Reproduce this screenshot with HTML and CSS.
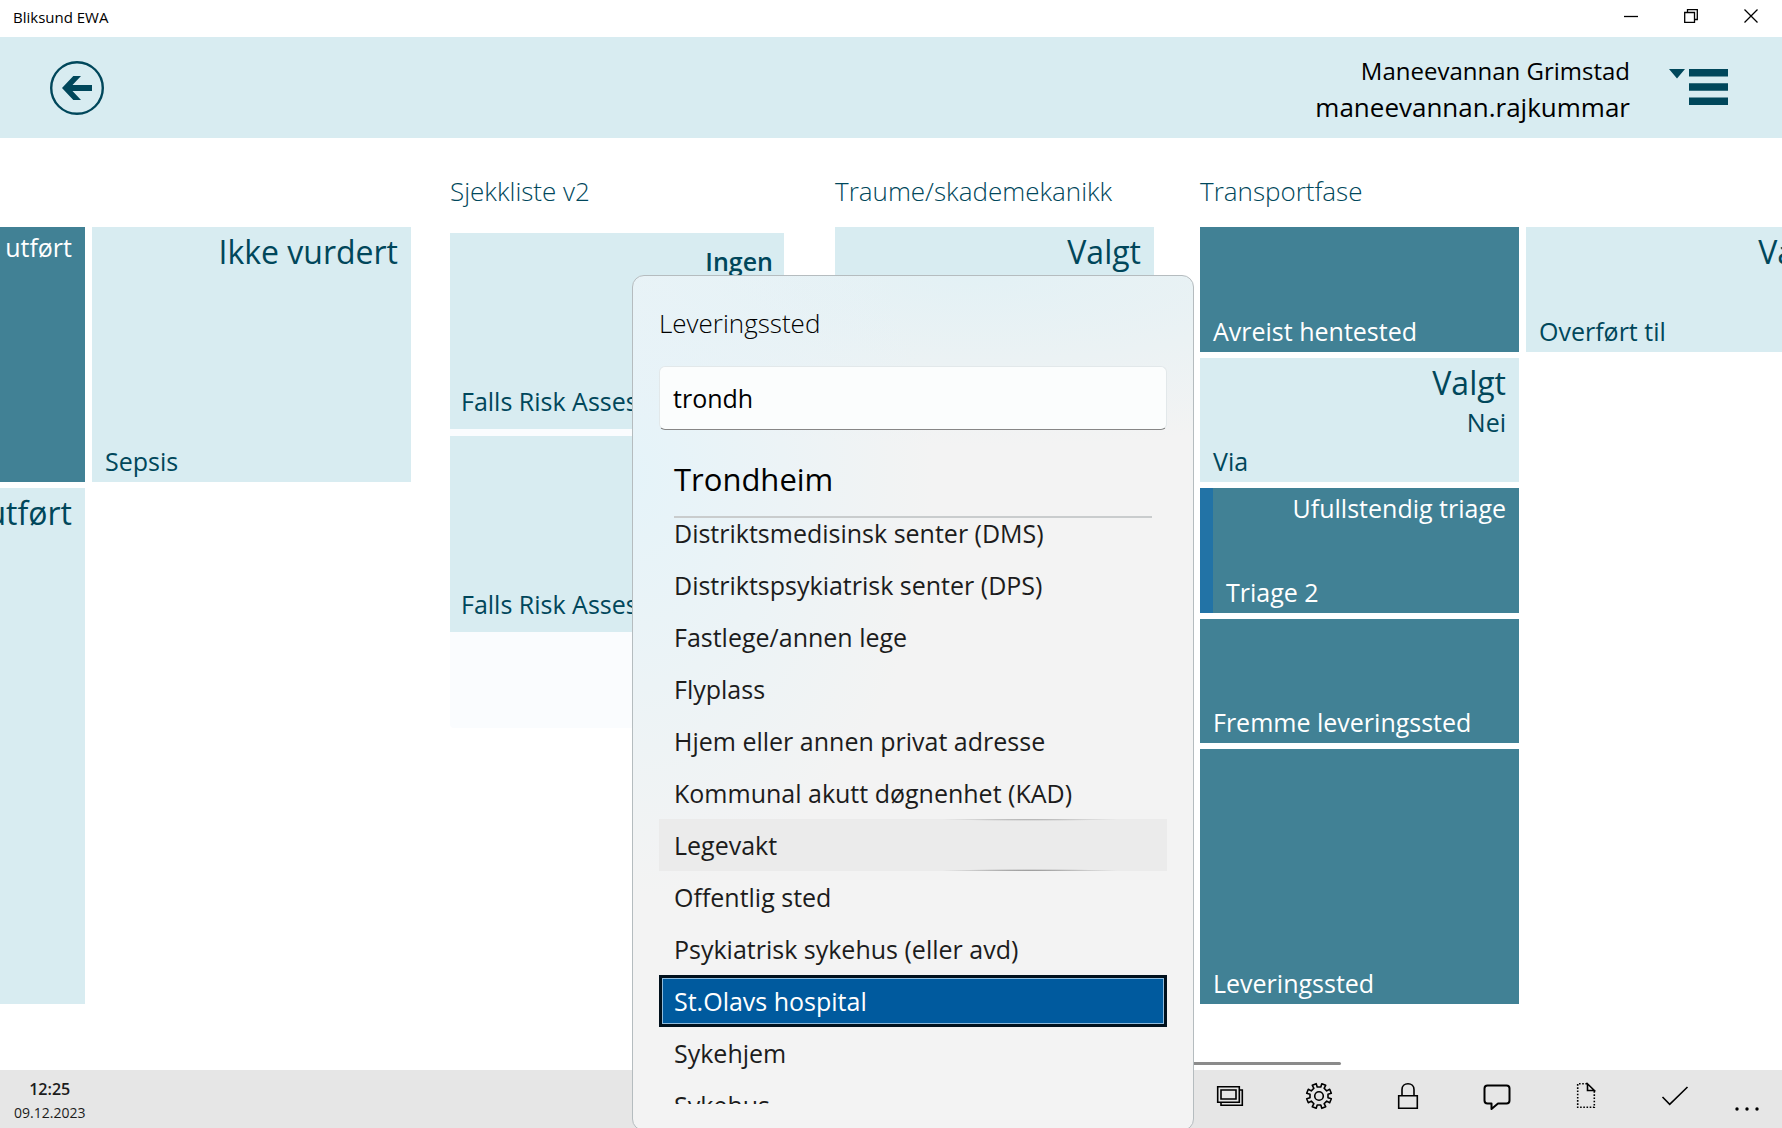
FILE: index.html
```html
<!DOCTYPE html>
<html lang="nb">
<head>
<meta charset="utf-8">
<title>Bliksund EWA</title>
<link rel="stylesheet" href="styles.css">
</head>
<body>
<div class="app">
  <div class="titlebar">
    <span class="titlebar-name">Bliksund EWA</span>
    <div class="window-buttons">
      <button class="window-button" type="button" aria-label="Minimer"><svg width="14" height="14" viewBox="0 0 14 14"><path d="M0 7.500H14"/></svg></button>
      <button class="window-button" type="button" aria-label="Gjenopprett"><svg width="14" height="14" viewBox="0 0 14 14"><path d="M.7 3.500H10.500V13.300H.7ZM3.500 3.500V.7H13.300V10.500H10.500"/></svg></button>
      <button class="window-button" type="button" aria-label="Lukk"><svg width="14" height="14" viewBox="0 0 14 14"><path d="M.5 .5L13.500 13.500M13.500 .5L.5 13.500"/></svg></button>
    </div>
  </div>

  <header class="header">
    <button class="back" type="button" aria-label="Tilbake">
      <svg width="54" height="54" viewBox="0 0 54 54"><circle cx="27" cy="27" r="25.800" fill="none" stroke="#00475b" stroke-width="2.400"/><path fill="#00475b" d="M12 27L23.300 15H31L22.500 24H42V30H22.500L31 39H23.300Z"/></svg>
    </button>
    <div class="user">
      <span class="user-name">Maneevannan Grimstad</span>
      <span class="user-login">maneevannan.rajkummar</span>
    </div>
    <button class="menu" type="button" aria-label="Meny">
      <svg width="60" height="38" viewBox="0 0 60 38"><path fill="#00475b" d="M0 0H16L8 9.500ZM20 0H59V7.500H20ZM20 14.300H59V21.800H20ZM20 28.600H59V36H20Z"/></svg>
    </button>
  </header>

  <main class="board">
    <section class="group group-wide">
      <h2 class="group-title"></h2>
      <div class="tiles">
        <button class="tile tile-dark tile-tall" type="button"><span class="tile-status">utført</span></button>
        <button class="tile tile-tall" type="button"><span class="tile-value">Ikke vurdert</span><span class="tile-name">Sepsis</span></button>
        <button class="tile tile-huge" type="button"><span class="tile-value">utført</span></button>
      </div>
    </section>
    <section class="group group-check">
      <h2 class="group-title">Sjekkliste v2</h2>
      <div class="checklist">
        <button class="card" type="button"><span class="card-status">Ingen</span><span class="tile-name">Falls Risk Assessment</span></button>
        <button class="card" type="button"><span class="tile-name">Falls Risk Assessment</span></button>
      </div>
    </section>
    <section class="group group-trauma">
      <h2 class="group-title">Traume/skademekanikk</h2>
      <div class="tiles">
        <button class="tile" type="button"><span class="tile-value">Valgt</span></button>
      </div>
    </section>
    <section class="group group-wide">
      <h2 class="group-title">Transportfase</h2>
      <div class="tiles">
        <button class="tile tile-dark" type="button"><span class="tile-name">Avreist hentested</span></button>
        <button class="tile" type="button"><span class="tile-value">Valgt</span><span class="tile-name">Overført til</span></button>
        <button class="tile tile-first" type="button"><span class="tile-value">Valgt</span><span class="tile-detail">Nei</span><span class="tile-name">Via</span></button>
        <button class="tile tile-dark tile-triage tile-first" type="button"><span class="tile-status">Ufullstendig triage</span><span class="tile-name">Triage 2</span></button>
        <button class="tile tile-dark tile-first" type="button"><span class="tile-name">Fremme leveringssted</span></button>
        <button class="tile tile-dark tile-tall tile-first" type="button"><span class="tile-name">Leveringssted</span></button>
      </div>
    </section>
    <div class="scrollbar"></div>
  </main>

  <footer class="footer">
    <div class="clock"><strong class="clock-time">12:25</strong><span class="clock-date">09.12.2023</span></div>
    <div class="commands">
      <button class="command" type="button" aria-label="Vinduer"><svg width="28" height="28" viewBox="0 0 28 28"><path d="M1.700 4.700H23.300V20.300H1.700ZM5 8H20V17H5ZM5 20.500V23.300H26.300V8H23.500"/></svg></button>
      <button class="command" type="button" aria-label="Innstillinger"><svg width="28" height="28" viewBox="0 0 28 28"><circle cx="14" cy="14" r="4.300"/><path stroke-linejoin="round" d="M12.200 5H15.800L16.800 1.700L20.700 3.300L19.100 6.300L21.700 8.900L24.700 7.300L26.300 11.200L23 12.200V15.800L26.300 16.800L24.700 20.700L21.700 19.100L19.100 21.700L20.700 24.700L16.800 26.300L15.800 23H12.200L11.200 26.300L7.300 24.700L8.900 21.700L6.300 19.100L3.300 20.700L1.700 16.800L5 15.800V12.200L1.700 11.200L3.300 7.300L6.300 8.900L8.900 6.300L7.300 3.300L11.200 1.700Z"/></svg></button>
      <button class="command" type="button" aria-label="Lås"><svg width="28" height="28" viewBox="0 0 28 28"><path d="M4.700 13.700H23.300V26.300H4.700ZM8 13.500V7.500C8 4 10.500 1.700 14 1.700S20 4 20 7.500V13.500"/></svg></button>
      <button class="command" type="button" aria-label="Meldinger"><svg width="28" height="28" viewBox="0 0 28 28"><path class="bold" d="M4.500 3.500H23.500Q26.500 3.500 26.500 6.500V18.500Q26.500 21.500 23.500 21.500H15L8.500 27V21.500H4.500Q1.500 21.500 1.500 18.500V6.500Q1.500 3.500 4.500 3.500Z"/></svg></button>
      <button class="command" type="button" aria-label="Nytt dokument"><svg width="28" height="28" viewBox="0 0 28 28"><path stroke-dasharray="1.600 1.600" d="M15 1.800H5.700V25.300H22.300V9"/><path d="M15.500 1.800V8.500H22.300Z"/></svg></button>
      <button class="command" type="button" aria-label="Godkjenn"><svg width="28" height="28" viewBox="0 0 28 28"><path d="M1.500 15L8.700 22.300L26.500 5"/></svg></button>
      <button class="command command-more" type="button" aria-label="Mer"><svg width="28" height="28" viewBox="0 0 28 28"><g class="dots"><circle cx="4" cy="27" r="1.700"/><circle cx="14" cy="27" r="1.700"/><circle cx="24" cy="27" r="1.700"/></g></svg></button>
    </div>
  </footer>

  <div class="flyout" role="dialog" aria-labelledby="flyout-title">
    <label class="flyout-title" id="flyout-title" for="search">Leveringssted</label>
    <input class="search" id="search" type="text" value="trondh">
    <h3 class="city">Trondheim</h3>
    <ul class="places">
      <li><button class="place" type="button">Distriktsmedisinsk senter (DMS)</button></li>
      <li><button class="place" type="button">Distriktspsykiatrisk senter (DPS)</button></li>
      <li><button class="place" type="button">Fastlege/annen lege</button></li>
      <li><button class="place" type="button">Flyplass</button></li>
      <li><button class="place" type="button">Hjem eller annen privat adresse</button></li>
      <li><button class="place" type="button">Kommunal akutt døgnenhet (KAD)</button></li>
      <li><button class="place place-hover" type="button">Legevakt</button></li>
      <li><button class="place" type="button">Offentlig sted</button></li>
      <li><button class="place" type="button">Psykiatrisk sykehus (eller avd)</button></li>
      <li><button class="place place-selected" type="button">St.Olavs hospital</button></li>
      <li><button class="place" type="button">Sykehjem</button></li>
      <li><button class="place" type="button">Sykehus</button></li>
    </ul>
  </div>
</div>
</body>
</html>
```
FILE: styles.css
```css
* {
  box-sizing: border-box;
}

body {
  margin: 0;
  font-family: "Open Sans", "Noto Sans", sans-serif;
  color: #000;
  background: #fff;
}

button {
  margin: 0;
  padding: 0;
  border: 0;
  background: none;
  color: inherit;
  font: inherit;
  text-align: left;
}

.app {
  position: relative;
  display: flex;
  flex-direction: column;
  height: 100vh;
  overflow: hidden;
}

/* Window title bar */
.titlebar {
  display: flex;
  flex: none;
  justify-content: space-between;
  height: 37px;
  padding: 0 1px 0 13px;
}

.titlebar-name {
  font-size: 15px;
  line-height: 34px;
}

.window-buttons {
  display: flex;
}

.window-button {
  display: grid;
  place-items: center;
  width: 60px;
  height: 32px;
}

.window-button svg {
  fill: none;
  stroke: #000;
  stroke-width: 1.3;
}

/* Header */
.header {
  display: flex;
  flex: none;
  align-items: center;
  height: 101px;
  padding: 0 53px 0 50px;
  background: #d8ecf1;
}

.back,
.menu {
  display: flex;
}

.user {
  display: flex;
  flex-direction: column;
  margin-left: auto;
  margin-right: 39px;
  padding-top: 2px;
  text-align: right;
  line-height: 37px;
}

.user-name {
  font-size: 24px;
}

.user-login {
  font-size: 26px;
}

/* Board of tile groups, scrolled sideways */
.board {
  position: relative;
  display: flex;
  flex: 1;
  min-height: 0;
  margin-left: -234px;
  padding-top: 32px;
  overflow: hidden;
  color: #00475b;
}

.group {
  flex: none;
}

.group-wide {
  width: 684px;
}

.group-check {
  width: 385px;
}

.group-trauma {
  width: 365px;
}

.group-title {
  height: 57px;
  margin: 0;
  font-size: 26px;
  font-weight: 300;
  line-height: 42px;
}

.tiles {
  display: grid;
  grid-template-columns: repeat(auto-fill, 319px);
  grid-auto-rows: 125px 124px;
  gap: 6px 7px;
}

.tile {
  display: flex;
  flex-direction: column;
  padding: 4px 13px 5px;
  background: #d8ecf1;
  white-space: nowrap;
}

.tile-dark {
  background: #418195;
  color: #fff;
}

.tile-tall {
  grid-row: span 2;
}

.tile-huge {
  grid-row: span 4;
}

.tile-first {
  grid-column: 1;
}

.tile-triage {
  border-left: 13px solid #2273a6;
}

.tile-value {
  align-self: flex-end;
  font-size: 32px;
  line-height: 42px;
}

.tile-status,
.tile-detail {
  align-self: flex-end;
  font-size: 25px;
  line-height: 32px;
}

.tile-detail {
  line-height: 36px;
}

.tile-name {
  margin-top: auto;
  font-size: 25px;
  line-height: 32px;
}

.tile-detail + .tile-name {
  line-height: 32px;
}

.checklist {
  display: flex;
  flex-direction: column;
  gap: 7px;
  width: 334px;
  height: 495px;
  margin-top: 6px;
  border-radius: 4px;
  background: #fafcfe;
}

.card {
  display: flex;
  flex-direction: column;
  height: 196px;
  padding: 12px 11px;
  background: #d8ecf1;
  white-space: nowrap;
}

.card-status {
  align-self: flex-end;
  font-size: 25px;
  font-weight: 600;
  line-height: 32px;
}

.scrollbar {
  position: absolute;
  right: 441px;
  bottom: 5px;
  width: 400px;
  height: 3px;
  border-radius: 2px;
  background: #8b8b8b;
}

/* Command bar */
.footer {
  display: flex;
  flex: none;
  justify-content: space-between;
  height: 58px;
  padding-left: 14px;
  background: #e6e6e6;
}

.clock {
  display: flex;
  flex-direction: column;
  align-items: center;
  padding-top: 7px;
  color: #1c1c1c;
  line-height: 24px;
}

.clock-time {
  font-size: 16px;
  font-weight: 600;
}

.clock-date {
  font-size: 14px;
}

.commands {
  display: flex;
}

.command {
  display: flex;
  justify-content: center;
  width: 89px;
  padding-top: 12px;
}

.command-more {
  width: 63px;
  padding-right: 7px;
}

.command svg {
  overflow: visible;
  fill: none;
  stroke: #000;
  stroke-width: 1.6;
}

.command .bold {
  stroke-width: 2;
  stroke-linejoin: round;
}

.command .dots {
  fill: #000;
  stroke: none;
}

/* Place picker */
.flyout {
  position: absolute;
  top: 275px;
  bottom: -3px;
  left: calc(50% - 259px);
  display: flex;
  flex-direction: column;
  width: 562px;
  padding: 26px;
  border: 1px solid #b5bcbf;
  border-radius: 12px;
  background:
    radial-gradient(ellipse 300px 420px at 0 200px, #e5f3f9, transparent),
    radial-gradient(ellipse 640px 170px at 340px 0, #e3f1f5, transparent),
    #f3f3f3;
}

.flyout-title {
  height: 64px;
  font-size: 26px;
  font-weight: 300;
  line-height: 42px;
}

.search {
  flex: none;
  width: 100%;
  height: 64px;
  padding: 0 13px;
  border: 1px solid #e2e8ea;
  border-bottom: 1px solid #868686;
  border-radius: 6px;
  outline: 0;
  background: #fbfdfd;
  color: #000;
  font: inherit;
  font-size: 25px;
}

.city {
  flex: none;
  height: 88px;
  margin: 0 15px;
  padding-top: 28px;
  border-bottom: 2px solid #c9cccd;
  font-size: 31px;
  font-weight: 400;
  line-height: 42px;
}

.places {
  flex: 1;
  min-height: 0;
  margin: 0;
  padding: 0;
  overflow: hidden;
  list-style: none;
}

.places li:first-child {
  margin-top: -11px;
}

.place {
  display: block;
  width: 100%;
  height: 52px;
  padding: 0 15px;
  color: #1c1c1c;
  font-size: 25px;
  white-space: nowrap;
}

.place-hover {
  background:
    radial-gradient(ellipse 90px 2px at 73% 0, #a8a8a8, transparent),
    radial-gradient(ellipse 90px 2px at 73% 100%, #888, transparent),
    #ebebeb;
}

.place-selected {
  border: 3px solid #00101c;
  padding: 0 12px;
  background: #005a9e;
  box-shadow: inset 0 0 0 1px #8fbbdc;
  color: #fff;
}
```
